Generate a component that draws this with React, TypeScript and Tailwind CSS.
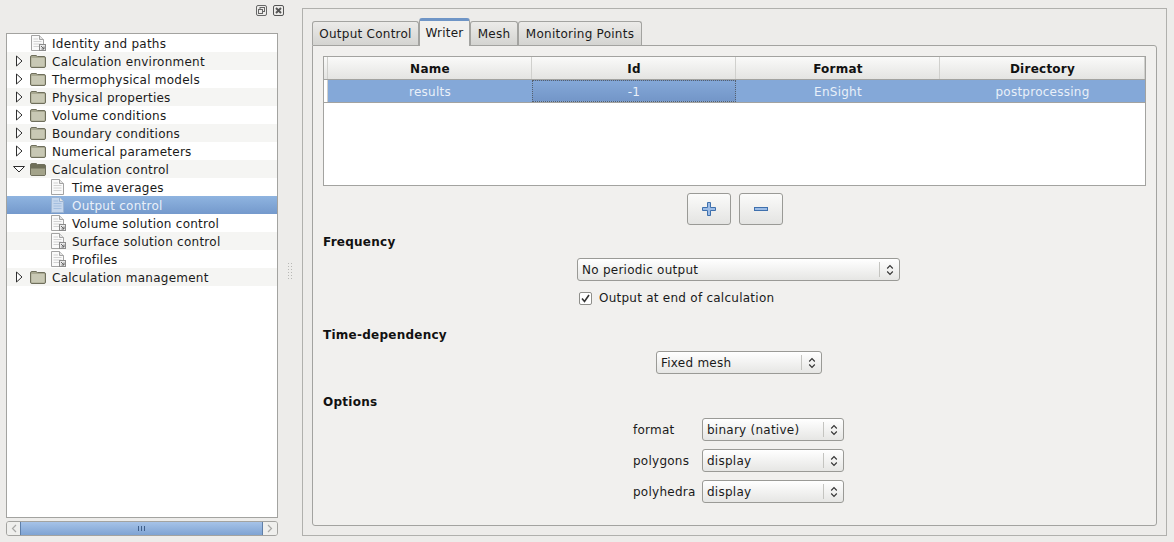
import type { ReactNode } from "react";

const rows = [
  { label: "Identity and paths", icon: "link", depth: 0 },
  { label: "Calculation environment", icon: "folder", depth: 0, arrow: "right" },
  { label: "Thermophysical models", icon: "folder", depth: 0, arrow: "right" },
  { label: "Physical properties", icon: "folder", depth: 0, arrow: "right" },
  { label: "Volume conditions", icon: "folder", depth: 0, arrow: "right" },
  { label: "Boundary conditions", icon: "folder", depth: 0, arrow: "right" },
  { label: "Numerical parameters", icon: "folder", depth: 0, arrow: "right" },
  { label: "Calculation control", icon: "open", depth: 0, arrow: "down" },
  { label: "Time averages", icon: "doc", depth: 1 },
  { label: "Output control", icon: "doc", depth: 1, selected: true },
  { label: "Volume solution control", icon: "link", depth: 1 },
  { label: "Surface solution control", icon: "link", depth: 1 },
  { label: "Profiles", icon: "link", depth: 1 },
  { label: "Calculation management", icon: "folder", depth: 0, arrow: "right" },
];

function Arrow({ dir }: { dir?: string }) {
  return (
    <svg width="23" height="14" viewBox="0 0 23 14" className="shrink-0">
      {dir === "right" && <path d="M9.5 2 V12 L15 7 Z" stroke="#2e2e2e" fill="#fff" />}
      {dir === "down" && <path d="M6.5 4.5 H17.5 L12 10 Z" stroke="#2e2e2e" fill="#fff" />}
    </svg>
  );
}

function TreeIcon({ kind, selected }: { kind: string; selected?: boolean }) {
  if (kind === "folder" || kind === "open") {
    return (
      <svg width="16" height="13" viewBox="0 0 16 13" className="shrink-0 block">
        <path d="M0.5 2 Q0.5 0.5 2 0.5 L6 0.5 L7.5 1.5 L14 1.5 Q15.5 1.5 15.5 3 L15.5 11 Q15.5 12.5 14 12.5 L2 12.5 Q0.5 12.5 0.5 11 Z" fill={kind === "open" ? "#6f6f58" : "#a9a992"} stroke="#6f6f5c" />
        {kind === "open" ? (
          <path d="M1 5.5 L15 5.5 L15 12 L1 12 Z" fill="#a3a38a" />
        ) : (
          <path d="M1.5 3 L14.5 3 L14.5 11.5 L1.5 11.5 Z" fill="#c8c8b4" />
        )}
      </svg>
    );
  }
  const paper = selected ? "#c5d6ec" : "#fafafa";
  const lines = selected ? "#a3bedf" : "#d2d2d2";
  return (
    <svg width="15" height="16" viewBox="0 0 15 16" className="shrink-0 block">
      <path d="M0.5 0.5 L8.5 0.5 L12.5 4.5 L12.5 15.5 L0.5 15.5 Z" fill={paper} stroke={selected ? "#9db5d3" : "#a3a3a3"} />
      <path d="M8.5 0.5 L8.5 4.5 L12.5 4.5" fill="#e4e4e4" stroke={selected ? "#9db5d3" : "#a3a3a3"} />
      <path d="M2.5 4 H7 M2.5 6.5 H10.5 M2.5 9 H10.5 M2.5 11.5 H10.5" stroke={lines} />
      {kind === "link" && (
        <g>
          <rect x="8.5" y="9.5" width="6" height="6" fill="#e8e8e8" stroke="#8b8b8b" />
          <path d="M10 11 L13 14 M13 11.5 V14 H10.5" stroke="#666" fill="none" />
        </g>
      )}
    </svg>
  );
}

function Combo({ label, className }: { label: string; className: string }) {
  return (
    <div className={`h-[23px] flex items-center rounded-[3px] border border-[#9a9a96] bg-gradient-to-b from-[#ffffff] to-[#e6e6e4] text-[12px] text-[#1a1a1a] ${className}`}>
      <span className="flex-1 pl-[4px] whitespace-nowrap">{label}</span>
      <span className="h-[15px] w-px bg-[#c4c4c0]" />
      <span className="w-[19px] flex justify-center">
        <svg width="8" height="12" viewBox="0 0 8 12" fill="none" stroke="#333" strokeWidth="1.1">
          <path d="M1.2 4.5 L4 1.5 L6.8 4.5 M1.2 7.5 L4 10.5 L6.8 7.5" />
        </svg>
      </span>
    </div>
  );
}

function SquareButton({ children }: { children: ReactNode }) {
  return (
    <button className="w-[44px] h-[32px] flex items-center justify-center rounded-[3px] border border-[#9a9a96] bg-gradient-to-b from-[#fbfbfa] to-[#e4e4e2]">
      {children}
    </button>
  );
}

function Tab({ label, active, className }: { label: string; active?: boolean; className: string }) {
  if (active) {
    return (
      <div className={`relative z-10 h-[28px] -mb-px pb-[1px] flex items-center justify-center bg-[#f1f0ee] border-x border-[#a3a3a0] text-[12px] text-[#1a1a1a] rounded-t-[3px] border-t-[3px] border-t-[#6f95c6] ${className}`}>
        {label}
      </div>
    );
  }
  return (
    <div className={`h-[24px] flex items-center justify-center border border-b-0 border-[#a3a3a0] rounded-t-[3px] bg-gradient-to-b from-[#ecebe9] to-[#d4d4d1] text-[12px] text-[#1a1a1a] ${className}`}>
      {label}
    </div>
  );
}

const columns = [
  { name: "Name", value: "results", width: "w-[204px]" },
  { name: "Id", value: "-1", width: "w-[204px]" },
  { name: "Format", value: "EnSight", width: "w-[204px]" },
  { name: "Directory", value: "postprocessing", width: "flex-1" },
];

const options = [
  ["format", "binary (native)"],
  ["polygons", "display"],
  ["polyhedra", "display"],
];

export default function App() {
  return (
    <div className="w-[1174px] h-[542px] flex bg-[#edecea] overflow-hidden tracking-[0.25px]" style={{ fontFamily: '"DejaVu Sans", sans-serif' }}>
      <div className="w-[284px] shrink-0 pl-[6px] flex flex-col">
        <div className="h-[27px] mb-[6px] flex justify-end items-start gap-[6px] pt-[5px]">
          <svg width="11" height="11" viewBox="0 0 11 11" fill="none" stroke="#666">
            <rect x="0.5" y="0.5" width="10" height="10" rx="1.5" />
            <rect x="4" y="2.5" width="4.5" height="4" />
            <rect x="2.5" y="4.5" width="4" height="4" fill="#edecea" />
          </svg>
          <svg width="11" height="11" viewBox="0 0 11 11" fill="none" stroke="#555">
            <rect x="0.5" y="0.5" width="10" height="10" rx="1.5" />
            <path d="M3 3 L8 8 M8 3 L3 8" strokeWidth="1.9" />
          </svg>
        </div>
        <div className="w-[272px] h-[485px] border border-[#a3a3a0] bg-white">
          {rows.map((row, i) => (
            <div
              key={row.label}
              className={`h-[18px] flex items-center text-[12px] whitespace-nowrap ${
                row.selected
                  ? "bg-gradient-to-b from-[#8fb4e0] to-[#7499cc] text-[#e9f0f9]"
                  : i % 2 === 1
                    ? "bg-[#f5f5f3] text-[#1a1a1a]"
                    : "bg-white text-[#1a1a1a]"
              }`}
            >
              <Arrow dir={row.arrow} />
              {row.depth === 1 && <span className="w-[21px] shrink-0" />}
              <span className={`shrink-0 ${row.depth === 1 ? "w-[21px]" : "w-[22px]"} ${row.icon === "link" && row.depth === 0 ? "pl-[1px]" : ""}`}>
                <TreeIcon kind={row.icon} selected={row.selected} />
              </span>
              <span className="pt-[1px]">{row.label}</span>
            </div>
          ))}
        </div>
        <div className="mt-[3px] w-[272px] h-[15px] flex rounded-[3px] border border-[#a3a3a0] overflow-hidden">
          <span className="w-[13px] flex items-center justify-center bg-[#efefed] text-[#a8a8a6]">
            <svg width="6" height="9" viewBox="0 0 6 9" fill="none" stroke="currentColor" strokeWidth="1.2"><path d="M5 1 L1.5 4.5 L5 8" /></svg>
          </span>
          <span className="flex-1 flex items-center justify-center gap-[2px] bg-gradient-to-b from-[#a6c3e8] to-[#7fa3d3] border-x border-[#5f7fa8]">
            <span className="w-px h-[5px] bg-[#3f5f8a]" />
            <span className="w-px h-[5px] bg-[#3f5f8a]" />
            <span className="w-px h-[5px] bg-[#3f5f8a]" />
          </span>
          <span className="w-[14px] flex items-center justify-center bg-[#efefed] text-[#a8a8a6]">
            <svg width="6" height="9" viewBox="0 0 6 9" fill="none" stroke="currentColor" strokeWidth="1.2"><path d="M1 1 L4.5 4.5 L1 8" /></svg>
          </span>
        </div>
      </div>

      <div className="w-[18px] shrink-0 flex items-center pl-[4px]">
        <div className="grid grid-cols-2 gap-x-[2px] gap-y-[2px]">
          {Array.from({ length: 12 }).map((_, i) => (
            <span key={i} className="w-[1px] h-[1px] bg-[#b8b8b5]" />
          ))}
        </div>
      </div>

      <div className="w-[865px] mt-[8px] h-[528px] border border-[#b0b0ad] pt-[9px] pl-[9px]">
        <div className="flex items-end h-[27px]">
          <Tab label="Output Control" className="w-[107px]" />
          <Tab label="Writer" active className="w-[51px]" />
          <Tab label="Mesh" className="w-[48px]" />
          <Tab label="Monitoring Points" className="w-[124px]" />
        </div>
        <div className="h-[481px] w-[845px] rounded-[3px] rounded-tl-none border border-[#a3a3a0] bg-[#f1f0ee] px-[10px] pt-[10px]">
          <div className="h-[130px] border border-[#a3a3a0] bg-white">
            <div className="h-[23px] flex border-b border-[#a3a3a0] bg-gradient-to-b from-[#fafaf9] to-[#e4e4e2]">
              <div className="w-[4px] border-r border-[#d0d0cd]" />
              {columns.map((c) => (
                <div key={c.name} className={`${c.width} flex items-center justify-center pt-[2px] pl-[1px] text-[12px] font-bold text-[#111] border-r border-[#d0d0cd]`}>
                  {c.name}
                </div>
              ))}
            </div>
            <div className="h-[23px] flex border-b border-[#a3a3a0]">
              <div className="w-[4px] border-r border-[#d0d0cd]" />
              {columns.map((c) => (
                <div
                  key={c.name}
                  className={`${c.width} flex items-center justify-center pt-[2px] text-[12px] text-[#e9f0f9] ${
                    c.name === "Id"
                      ? "bg-gradient-to-b from-[#84a8d8] to-[#7396c8] border border-dotted border-[#55606e]"
                      : "bg-[#84a8d8]"
                  }`}
                >
                  {c.value}
                </div>
              ))}
            </div>
          </div>

          <div className="flex gap-[8px] mt-[7px] ml-[364px]">
            <SquareButton>
              <svg width="14" height="14" viewBox="0 0 14 14">
                <path d="M5.5 0.5 H8.5 V5.5 H13.5 V8.5 H8.5 V13.5 H5.5 V8.5 H0.5 V5.5 H5.5 Z" fill="#9cbce6" stroke="#3f70ad" />
              </svg>
            </SquareButton>
            <SquareButton>
              <svg width="14" height="4" viewBox="0 0 14 4">
                <rect x="0.5" y="0.5" width="13" height="3" fill="#9cbce6" stroke="#3f70ad" />
              </svg>
            </SquareButton>
          </div>

          <h3 className="mt-[9px] text-[12px] font-bold text-[#111] leading-[16px]">Frequency</h3>
          <Combo label="No periodic output" className="mt-[8px] ml-[254px] w-[323px]" />
          <label className="mt-[9px] ml-[256px] flex items-center gap-[7px] text-[12px] text-[#1a1a1a] leading-[16px]">
            <span className="w-[13px] h-[13px] flex items-center justify-center rounded-[2px] border border-[#8e8e8a] bg-white">
              <svg width="9" height="9" viewBox="0 0 9 9" fill="none" stroke="#333" strokeWidth="1.6"><path d="M1 4.5 L3.5 7.5 L8 1" /></svg>
            </span>
            Output at end of calculation
          </label>

          <h3 className="mt-[21px] text-[12px] font-bold text-[#111] leading-[16px]">Time-dependency</h3>
          <Combo label="Fixed mesh" className="mt-[8px] ml-[333px] w-[166px]" />

          <h3 className="mt-[20px] text-[12px] font-bold text-[#111] leading-[16px]">Options</h3>
          <div className="mt-[8px] ml-[310px] flex flex-col gap-[8px]">
            {options.map(([name, value]) => (
              <div key={name} className="flex items-center">
                <span className="w-[69px] text-[12px] text-[#1a1a1a]">{name}</span>
                <Combo label={value} className="w-[142px]" />
              </div>
            ))}
          </div>
        </div>
      </div>
    </div>
  );
}
